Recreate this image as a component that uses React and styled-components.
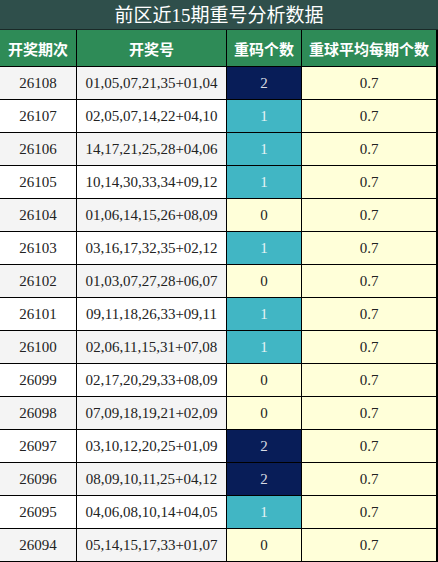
import React from "react";
import styled, { createGlobalStyle } from "styled-components";

const Global = createGlobalStyle`
  html, body { margin: 0; padding: 0; background: #fff; }
  * { box-sizing: border-box; }
`;

const rows = [
  ["26108", "01,05,07,21,35+01,04", 2],
  ["26107", "02,05,07,14,22+04,10", 1],
  ["26106", "14,17,21,25,28+04,06", 1],
  ["26105", "10,14,30,33,34+09,12", 1],
  ["26104", "01,06,14,15,26+08,09", 0],
  ["26103", "03,16,17,32,35+02,12", 1],
  ["26102", "01,03,07,27,28+06,07", 0],
  ["26101", "09,11,18,26,33+09,11", 1],
  ["26100", "02,06,11,15,31+07,08", 1],
  ["26099", "02,17,20,29,33+08,09", 0],
  ["26098", "07,09,18,19,21+02,09", 0],
  ["26097", "03,10,12,20,25+01,09", 2],
  ["26096", "08,09,10,11,25+04,12", 2],
  ["26095", "04,06,08,10,14+04,05", 1],
  ["26094", "05,14,15,17,33+01,07", 0],
];

const heat = {
  0: { bg: "#ffffd9", fg: "#222" },
  1: { bg: "#41b6c4", fg: "#e6f4f5" },
  2: { bg: "#081d58", fg: "#d8dbe4" },
};

const Table = styled.div`
  width: 438px;
  display: grid;
  grid-template-columns: 77px 150px 75px 136px;
  font-family: "Liberation Serif", "Noto Sans CJK SC", serif;
`;

const Title = styled.div`
  grid-column: 1 / -1;
  height: 30px;
  background: #2f4f4b;
  border-bottom: 1px solid #1a2a28;
  color: #fff;
  font-size: 19px;
  display: flex;
  align-items: center;
  justify-content: center;
  line-height: 1;
  padding-top: 1px;
`;

const Head = styled.div`
  height: 37px;
  background: #2e8b57;
  color: #fff;
  font-family: "Noto Sans CJK SC", sans-serif;
  font-weight: 700;
  font-size: 15px;
  display: flex;
  align-items: center;
  justify-content: center;
  border-right: ${(p) => (p.$last ? "2px" : "1px")} solid #000;
  border-bottom: 1px solid #000;
`;

const Cell = styled.div`
  height: 33px;
  background: ${(p) => p.$bg};
  color: ${(p) => p.$fg || "#222"};
  font-size: 15px;
  display: flex;
  align-items: center;
  justify-content: center;
  border-right: ${(p) => (p.$last ? "2px" : "1px")} solid #000;
  border-bottom: 1px solid #000;
  padding-top: 1px;
`;

export default function App() {
  return (
    <>
      <Global />
      <Table>
        <Title>前区近15期重号分析数据</Title>
        <Head>开奖期次</Head>
        <Head>开奖号</Head>
        <Head>重码个数</Head>
        <Head $last>重球平均每期个数</Head>
        {rows.map(([issue, nums, n], i) => {
          const base = i % 2 === 0 ? "#f4f4f4" : "#ffffff";
          return (
            <React.Fragment key={issue}>
              <Cell $bg={base}>{issue}</Cell>
              <Cell $bg={base}>{nums}</Cell>
              <Cell $bg={heat[n].bg} $fg={heat[n].fg}>{n}</Cell>
              <Cell $bg="#ffffd9" $last>0.7</Cell>
            </React.Fragment>
          );
        })}
      </Table>
    </>
  );
}
